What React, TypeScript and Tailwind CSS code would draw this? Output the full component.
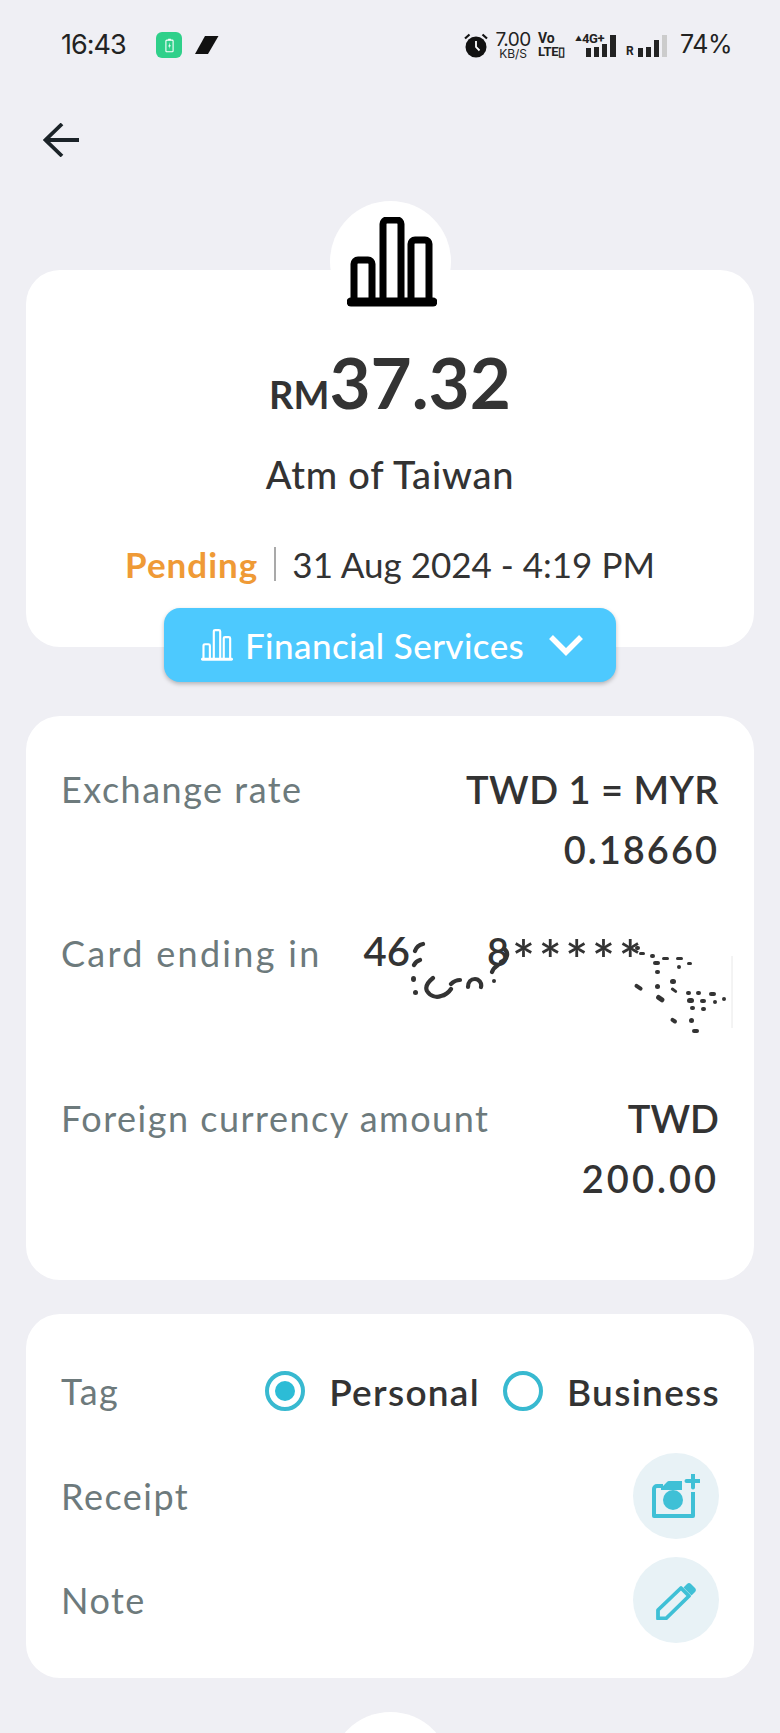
import React from "react";

const BarsIcon = ({ className, stroke }: { className: string; stroke: number }) => (
  <svg viewBox="0 0 90 90" className={className} fill="none" stroke="currentColor" strokeWidth={stroke} strokeLinejoin="round">
    <path d="M7 84V47a4 4 0 0 1 4-4h10a4 4 0 0 1 4 4v37" />
    <path d="M36 84V7a4 4 0 0 1 4-4h10a4 4 0 0 1 4 4v77" />
    <path d="M64 84V27a4 4 0 0 1 4-4h10a4 4 0 0 1 4 4v57" />
    <path d="M4 85h82" strokeLinecap="round" strokeWidth={stroke + 2} />
  </svg>
);

const StatusBar = () => (
  <div className="h-[90px] flex items-center justify-between pl-[61px] pr-[48px] text-[#222] font-['Inter',sans-serif]">
    <div className="flex items-center">
      <span className="text-[27px] tracking-[-1px] w-[95px]">16:43</span>
      <div className="w-[26px] h-[26px] rounded-[6px] bg-[#2fd08a] flex items-center justify-center">
        <svg viewBox="0 0 10 16" className="w-[9px] h-[15px]">
          <rect x="1" y="2" width="8" height="13" rx="1" fill="none" stroke="#fff" strokeWidth="1.2" />
          <rect x="3.5" y="0.5" width="3" height="1.5" fill="#fff" />
          <path d="M5.6 4.5 3.6 9h1.4l-.6 3 2.1-4.4H5.1z" fill="#fff" />
        </svg>
      </div>
      <svg viewBox="0 0 24 18" className="w-[24px] h-[18px] ml-[13px]">
        <path d="M10 0h13.5L13 18H0z" fill="#111" />
      </svg>
    </div>
    <div className="flex items-center">
      <svg viewBox="0 0 24 25" className="w-[24px] h-[25px]">
        <circle cx="12" cy="14" r="10.5" fill="#111" />
        <path d="M12 8v6l3.5 3.5" stroke="#fff" strokeWidth="1.8" fill="none" />
        <path d="M1 5.5 5.5 1.5M23 5.5 18.5 1.5" stroke="#111" strokeWidth="2.2" />
      </svg>
      <div className="ml-[8px] w-[34px] flex flex-col items-center leading-none">
        <span className="text-[19px] leading-[17px] tracking-[-0.5px]">7.00</span>
        <span className="text-[12px] leading-[12px]">KB/S</span>
      </div>
      <div className="ml-[8px] w-[26px] flex flex-col items-start font-bold font-['Roboto',sans-serif] leading-none">
        <span className="text-[14px] leading-[13px] tracking-[-0.3px]">Vo</span>
        <span className="text-[13px] leading-[13px] tracking-[-0.3px]">LTE▯</span>
      </div>
      <div className="ml-[11px] w-[42px] relative h-[24px]">
        <span className="absolute left-0 top-[2px] text-[7px] leading-none text-[#222]">▲</span>
        <span className="absolute left-[7px] -top-[1px] text-[13px] leading-none font-bold font-['Roboto',sans-serif] tracking-[-0.5px]">4G+</span>
        <div className="absolute left-[11px] bottom-0 flex items-end gap-[3px]">
          <div className="w-[5px] h-[9px] bg-[#222]" />
          <div className="w-[5px] h-[10px] bg-[#222]" />
          <div className="w-[5px] h-[13px] bg-[#222]" />
          <div className="w-[6px] h-[22px] bg-[#222]" />
        </div>
      </div>
      <div className="ml-[9px] w-[43px] h-[24px] flex items-end gap-[3px]">
        <span className="text-[12px] leading-[12px] font-bold font-['Roboto',sans-serif] mr-[1px]">R</span>
        <div className="w-[5px] h-[9px] bg-[#222]" />
        <div className="w-[5px] h-[10px] bg-[#222]" />
        <div className="w-[5px] h-[17px] bg-[#222]" />
        <div className="w-[5px] h-[22px] bg-[#ccc]" />
      </div>
      <span className="ml-[11px] text-[25px] tracking-[-0.5px]">74%</span>
    </div>
  </div>
);

const labelClass = "text-[#6d7a7c] text-[36px] leading-[60px] tracking-[1.5px]";
const valueClass = "text-right text-[#333] text-[38px] leading-[60px] font-semibold";

// the scan noise over the masked card number
const specks = [
  [635, 946, 5, 4], [639, 952, 6, 3], [650, 954, 5, 4], [653, 961, 7, 4], [662, 957, 7, 3], [676, 957, 7, 3],
  [655, 970, 5, 4], [677, 965, 4, 4], [687, 962, 5, 3], [636, 983, 9, 4], [655, 984, 5, 5], [670, 979, 6, 5],
  [672, 987, 7, 3], [658, 994, 9, 5], [686, 991, 5, 4], [696, 991, 5, 4], [709, 992, 7, 4], [687, 998, 7, 5],
  [700, 999, 6, 4], [713, 1000, 4, 4], [722, 997, 4, 4], [690, 1006, 5, 4], [701, 1007, 5, 4], [672, 1017, 7, 4],
  [689, 1018, 5, 5], [692, 1029, 7, 4], [411, 976, 5, 6], [413, 990, 5, 5], [492, 979, 4, 4],
];

const CardNoise = () => (
  <svg viewBox="340 920 420 130" className="absolute left-[314px] top-[204px] w-[420px] h-[130px]" aria-hidden="true">
    {specks.map(([x, y, w, h]) => (
      <rect
        key={`${x}-${y}`}
        x={x}
        y={y}
        width={w}
        height={h}
        rx={h / 2}
        fill="#333"
        transform={w > 6 && x < 680 && y > 975 ? `rotate(35 ${x} ${y})` : undefined}
      />
    ))}
    <path d="M423 944c-5 1-7 4-8 7M420 960c-3 1-5 3-6 5M433 978c-5 4-8 9-6 13 3 5 9 7 14 5 5-1 8-4 10-7M451 984c3-3 6-4 9-4M468 987c0-5 3-8 7-8s7 4 6 8M501 962c7-3 8-10 3-13M492 972c1-3 3-5 6-7" fill="none" stroke="#333" strokeWidth="4.2" strokeLinecap="round" />
    <path d="M732 956v72" stroke="#e8e8e8" strokeWidth="1" />
  </svg>
);

export default function App() {
  return (
    <div className="w-[780px] h-[1733px] overflow-hidden bg-[#efeff4] font-['Lato',sans-serif]">
      <StatusBar />

      <div className="pl-[43px] mt-[33px] h-[34px]">
        <svg viewBox="0 0 36 34" className="w-[36px] h-[34px]" fill="none" stroke="#1b2328" strokeWidth="3.8">
          <path d="M36 17H3M19 1 2.5 17 19 33" />
        </svg>
      </div>

      <div className="relative z-10 mt-[44px] -mb-[52px] mx-auto w-[121px] h-[121px] rounded-full bg-white flex items-center justify-center">
        <BarsIcon className="w-[90px] h-[90px] ml-[3px] text-black" stroke={7} />
      </div>

      <div className="mx-[26px] h-[377px] rounded-[34px] bg-white flex flex-col items-center pt-[72px] text-[#333]">
        <div className="flex items-baseline font-bold h-[80px]">
          <span className="text-[38px] leading-none">RM</span>
          <span className="text-[71px] leading-[80px]">37.32</span>
        </div>
        <div className="mt-[29px] text-[38px] leading-[46px] font-medium tracking-[0.8px]">Atm of Taiwan</div>
        <div className="mt-[45px] flex items-center text-[35px] leading-[44px]">
          <span className="font-bold text-[#ef9a36] tracking-[1px]">Pending</span>
          <span className="mx-[16px] w-[2px] h-[34px] bg-[#a9a9a9]" />
          <span>31 Aug 2024 - 4:19 PM</span>
        </div>
      </div>

      <div className="relative z-10 -mt-[39px] mx-auto w-[452px] h-[74px] rounded-[16px] bg-[#4dc9fe] shadow-[0_2px_4px_rgba(0,0,0,0.25)] flex items-center pl-[37px] text-white">
        <BarsIcon className="w-[32px] h-[32px]" stroke={6} />
        <span className="ml-[12px] text-[35px] font-medium leading-none tracking-[0.4px]">Financial Services</span>
        <svg viewBox="0 0 34 22" className="absolute left-[385px] top-[26px] w-[34px] h-[22px]" fill="none" stroke="#fff" strokeWidth="5.5">
          <path d="M2 3l15 15L32 3" />
        </svg>
      </div>

      <div className="relative mt-[34px] mx-[26px] h-[564px] rounded-[34px] bg-white px-[35px] pt-[43px]">
        <div className="flex justify-between">
          <span className={labelClass}>Exchange rate</span>
          <div className={valueClass}>
            <div className="tracking-[0.5px]">TWD 1 = MYR</div>
            <div className="tracking-[2px]">0.18660</div>
          </div>
        </div>
        <div className="mt-[44px] flex h-[60px]">
          <span className="text-[#6d7a7c] text-[36px] leading-[60px] tracking-[2.3px]">Card ending in</span>
          <span className="ml-[42px] text-[#333] text-[40px] leading-[56px] font-semibold">46</span>
          <span className="ml-[77px] text-[#333] text-[38px] leading-[56px] font-semibold">8</span>
          <span className="ml-[3px] mt-[9px] text-[#333] text-[54px] leading-[56px] font-semibold tracking-[3.7px]">*****</span>
        </div>
        <CardNoise />
        <div className="h-[105px]" />
        <div className="flex justify-between">
          <span className={labelClass}>Foreign currency amount</span>
          <div className={valueClass}>
            <div>TWD</div>
            <div className="tracking-[3px]">200.00</div>
          </div>
        </div>
      </div>

      <div className="mt-[34px] mx-[26px] h-[364px] rounded-[34px] bg-white pl-[35px] pr-[34px] pt-[49px]">
        <div className="flex items-center justify-between h-[56px]">
          <span className="text-[#6d7a7c] text-[36px] leading-none tracking-[1.5px]">Tag</span>
          <div className="flex items-center text-[#333] text-[37px] font-semibold leading-none tracking-[1.3px]">
            <span className="w-[40px] h-[40px] rounded-full border-[4.5px] border-[#38b9d0] flex items-center justify-center">
              <span className="w-[20px] h-[20px] rounded-full bg-[#2cbcd6]" />
            </span>
            <span className="ml-[24px]">Personal</span>
            <span className="ml-[23px] w-[40px] h-[40px] rounded-full border-[4.5px] border-[#38b9d0]" />
            <span className="ml-[24px]">Business</span>
          </div>
        </div>
        <div className="mt-[34px] flex items-center justify-between h-[86px] pr-[1px]">
          <span className="text-[#6d7a7c] text-[36px] leading-none tracking-[1.5px]">Receipt</span>
          <div className="w-[86px] h-[86px] rounded-full bg-[#e8f2f6] flex items-center justify-center">
            <svg viewBox="0 0 48 44" className="w-[48px] h-[44px]" fill="none">
              <path d="M41 18v24H2V15a3 3 0 0 1 3-3h6" stroke="#3fc0d6" strokeWidth="4" strokeLinejoin="round" />
              <path d="M9 14l6-6a3 3 0 0 1 2-1h13v9H9z" fill="#3fc0d6" />
              <circle cx="21" cy="26" r="10" fill="#3fc0d6" />
              <path d="M41 0.5v13M34.5 7h13" stroke="#3fc0d6" strokeWidth="4" strokeLinecap="round" />
            </svg>
          </div>
        </div>
        <div className="mt-[18px] flex items-center justify-between h-[86px] pr-[1px]">
          <span className="text-[#6d7a7c] text-[36px] leading-none tracking-[1.5px]">Note</span>
          <div className="w-[86px] h-[86px] rounded-full bg-[#e8f2f6] flex items-center justify-center">
            <svg viewBox="0 0 40 39" className="w-[40px] h-[39px]" fill="none">
              <path d="M2 37.5V29L25 7l8 8L10 37.5z" stroke="#3fc0d6" strokeWidth="3.8" strokeLinejoin="round" />
              <path d="M27.5 6.5 31 3a3 3 0 0 1 4 0l4 4a3 3 0 0 1 0 4l-3.5 3.5z" fill="#3fc0d6" />
            </svg>
          </div>
        </div>
      </div>

      <div className="mt-[34px] mx-auto w-[121px] h-[121px] rounded-full bg-white" />
    </div>
  );
}
